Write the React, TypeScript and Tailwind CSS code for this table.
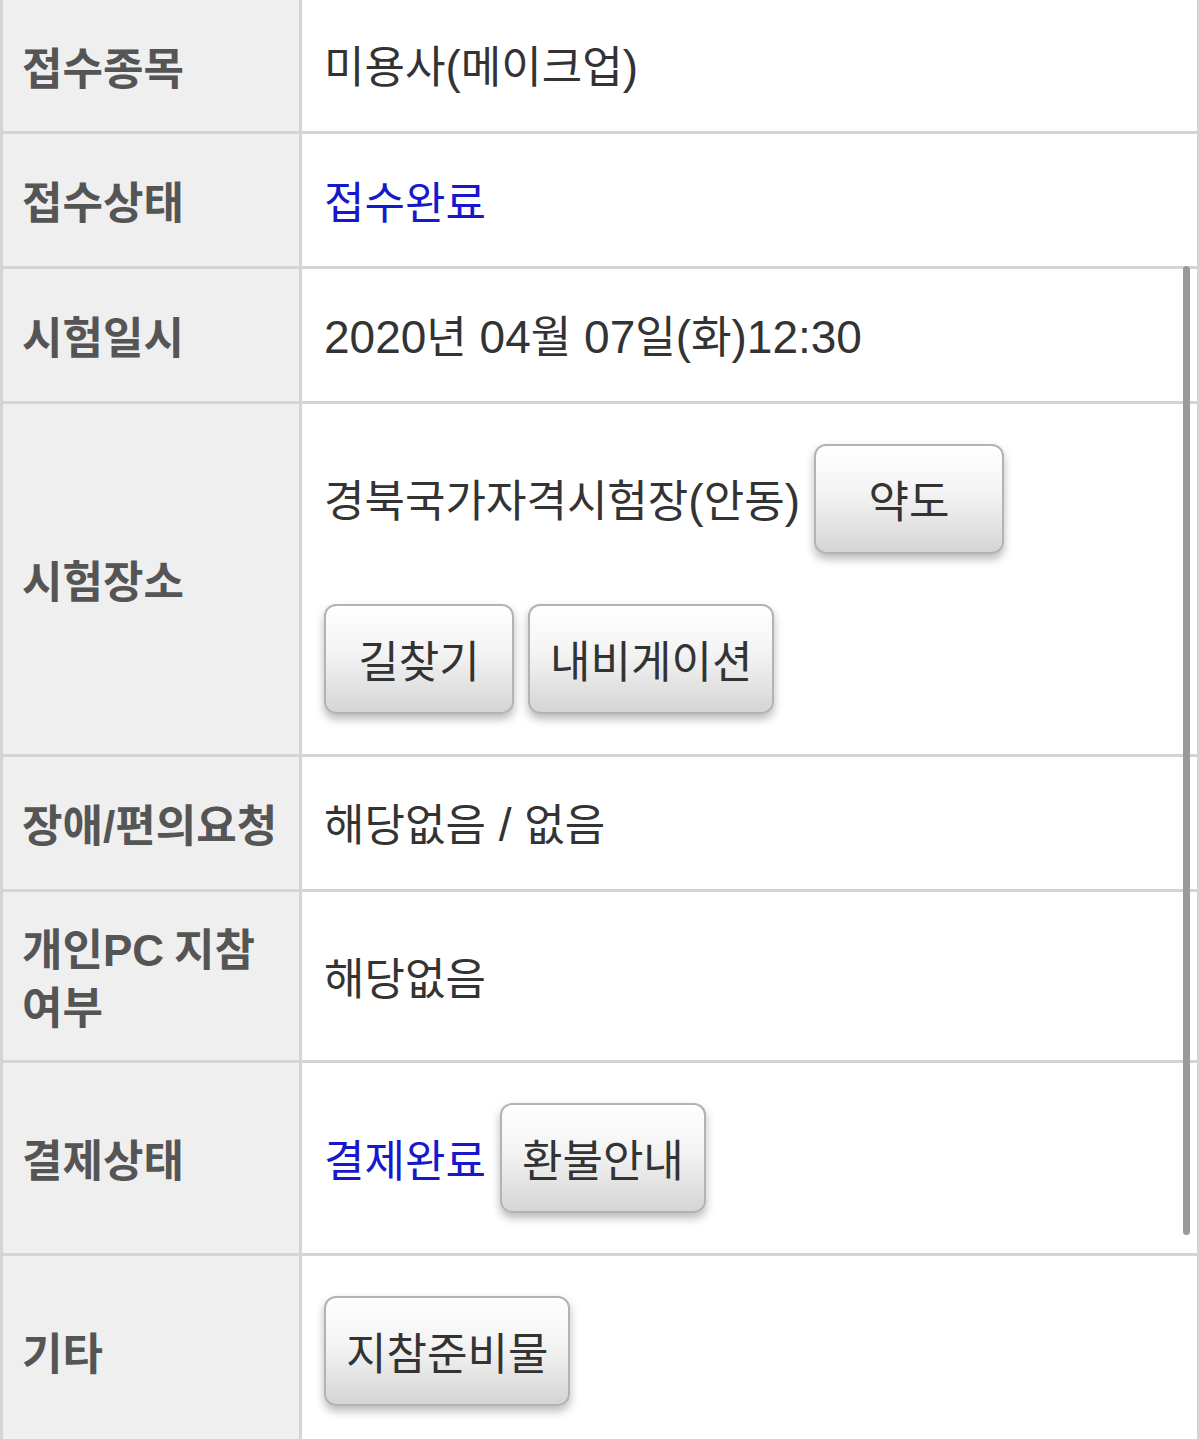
import React from 'react';

const latin = "font-['Liberation_Sans','Noto_Sans_CJK_KR',sans-serif] text-[46px]";

const Btn = ({ children }: { children: React.ReactNode }) => (
  <button className="h-[110px] min-w-[190px] px-[20px] rounded-[12px] border-2 border-[#b3b3b3] bg-[linear-gradient(180deg,#ffffff_0%,#f3f3f3_45%,#d5d5d5_100%)] shadow-[0_5px_10px_rgba(0,0,0,0.28)] text-[44px] leading-none text-[#333]">
    {children}
  </button>
);

const Row = ({
  label,
  children,
  pad = 'py-0',
  first = false,
}: {
  label: React.ReactNode;
  children: React.ReactNode;
  pad?: string;
  first?: boolean;
}) => (
  <div className={`flex border-b-[3px] border-[#d4d4d4] ${first ? 'min-h-[134px]' : 'min-h-[135px]'}`}>
    <div className="w-[299px] shrink-0 bg-[#efefef] border-r-[3px] border-[#d4d4d4] flex items-center pl-[19px] pr-[10px] py-[26px] font-bold text-[#555]">
      <div>{label}</div>
    </div>
    <div className={`flex-1 flex items-center pl-[22px] pr-[20px] text-[#333] ${pad}`}>{children}</div>
  </div>
);

export default function App() {
  return (
    <div className="relative w-[1200px] bg-white font-['Noto_Sans_CJK_KR',sans-serif] text-[44px] leading-[58px]">
      <div className="border-x-[3px] border-[#d4d4d4]">
        <Row label="접수종목" first>
          <span>
            미용사<span className={latin}>(</span>메이크업<span className={latin}>)</span>
          </span>
        </Row>
        <Row label="접수상태">
          <span className="text-[#1717cc]">접수완료</span>
        </Row>
        <Row label="시험일시">
          <span>
            <span className={latin}>2020</span>년<span className={latin}> 04</span>월<span className={latin}> 07</span>일
            <span className={latin}>(</span>화<span className={latin}>)12:30</span>
          </span>
        </Row>
        <Row label="시험장소" pad="py-[40px]">
          <div className="flex flex-wrap items-center gap-x-[14px] gap-y-[50px]">
            <span>
              경북국가자격시험장<span className={latin}>(</span>안동<span className={latin}>)</span>
            </span>
            <Btn>약도</Btn>
            <Btn>길찾기</Btn>
            <Btn>내비게이션</Btn>
          </div>
        </Row>
        <Row label={<>장애<span className="font-['Liberation_Sans',sans-serif] leading-[40px]">/</span>편의요청</>}>
          <span>
            해당없음<span className={latin}> / </span>없음
          </span>
        </Row>
        <Row label={<>개인<span className="font-['Liberation_Sans',sans-serif] leading-[40px]">PC</span> 지참 여부</>}>
          <span>해당없음</span>
        </Row>
        <Row label="결제상태" pad="py-[40px]">
          <div className="flex items-center gap-x-[14px]">
            <span className="text-[#1717cc]">결제완료</span>
            <Btn>환불안내</Btn>
          </div>
        </Row>
        <Row label="기타" pad="py-[40px]">
          <Btn>지참준비물</Btn>
        </Row>
      </div>
      <div className="absolute left-[1183px] top-[266px] w-[7px] h-[969px] rounded-full bg-[#9a9a9a]" />
    </div>
  );
}
